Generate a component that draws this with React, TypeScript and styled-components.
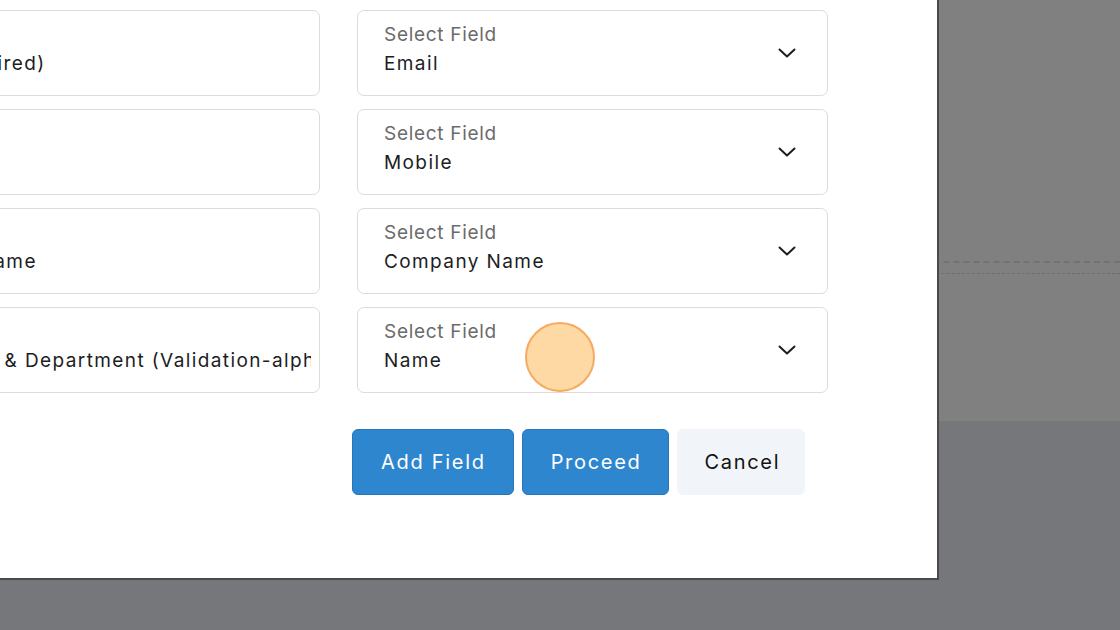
import React from 'react';
import styled, { createGlobalStyle } from 'styled-components';

const GlobalStyle = createGlobalStyle`
  html, body {
    margin: 0;
    padding: 0;
    background: #76777b;
    overflow: hidden;
  }
  body {
    font-family: 'Inter', 'DejaVu Sans', sans-serif;
  }
`;

const Page = styled.div`
  position: relative;
  width: 1120px;
  height: 630px;
`;

const Backdrop = styled.div`
  height: 421px;
  background: #808080;
  padding-top: 261px;
  box-sizing: border-box;
`;

const DashedLine = styled.div<{ $thin?: boolean }>`
  height: 0;
  border-top: ${(p) => (p.$thin ? '1px dashed #6e6e6e' : '2px dashed #727272')};
  margin-bottom: ${(p) => (p.$thin ? '0' : '10px')};
`;

const Modal = styled.div`
  position: absolute;
  top: 0;
  left: -175px;
  width: 1114px;
  height: 580px;
  box-sizing: border-box;
  background: #fff;
  border-right: 2px solid #4a4a4a;
  border-bottom: 2px solid #4a4a4a;
  padding: 10px 0 0 24px;
`;

const FieldGrid = styled.div`
  display: grid;
  grid-template-columns: 471px 471px;
  column-gap: 37px;
  row-gap: 13px;
`;

const FieldBox = styled.div`
  height: 86px;
  box-sizing: border-box;
  border: 1px solid #dcdcdc;
  border-radius: 7px;
  padding: 0 8px 0 26px;
  display: flex;
  align-items: center;
  gap: 12px;
  cursor: pointer;
`;

const FieldText = styled.div`
  flex: 1;
  min-width: 0;
  align-self: flex-start;
  padding-top: 9px;
`;

const Label = styled.div`
  font-size: 19px;
  line-height: 29px;
  color: #6b6b6b;
  white-space: nowrap;
  letter-spacing: 0.7px;
`;

const Value = styled.div`
  font-size: 19px;
  line-height: 30px;
  color: #1d1d1f;
  white-space: nowrap;
  overflow: hidden;
  letter-spacing: 1.4px;
`;

const Chevron = styled.svg`
  width: 18px;
  height: 10px;
  margin: 0 23px 0 0;
  flex-shrink: 0;
`;

const ButtonRow = styled.div`
  grid-column: 2;
  display: flex;
  gap: 8px;
  margin: 23px 0 0 -5px;
`;

const Button = styled.button<{ $variant?: 'primary' | 'light' }>`
  height: 66px;
  padding: ${(p) => (p.$variant === 'light' ? '0 24px 0 26px' : '0 27px 0 28px')};
  border-radius: 6px;
  font-family: 'Inter', 'DejaVu Sans', sans-serif;
  font-size: 20px;
  letter-spacing: 1.7px;
  cursor: pointer;
  border: 1px solid ${(p) => (p.$variant === 'light' ? '#f1f4f8' : '#2676bb')};
  background: ${(p) => (p.$variant === 'light' ? '#f1f4f8' : '#2e86cf')};
  color: ${(p) => (p.$variant === 'light' ? '#111' : '#fff')};
`;

const ClickMarker = styled.div`
  position: absolute;
  left: 525px;
  top: 322px;
  width: 70px;
  height: 70px;
  box-sizing: border-box;
  border-radius: 50%;
  background: rgba(254, 208, 140, 0.8);
  border: 2px solid #f4aa60;
  pointer-events: none;
`;

const rows = [
  { name: 'Email (Required)', mapped: 'Email' },
  { name: '', mapped: 'Mobile' },
  { name: 'Company Name', mapped: 'Company Name' },
  { name: 'Designation & Department (Validation-alphabets)', mapped: 'Name' },
];

const ChevronDown = () => (
  <Chevron viewBox="0 0 18 10" fill="none">
    <polyline points="1.5,1.5 9,8.5 16.5,1.5" stroke="#1d1d1f" strokeWidth="2" strokeLinecap="round" strokeLinejoin="round" />
  </Chevron>
);

const App: React.FC = () => {
  return (
    <>
      <GlobalStyle />
      <Page>
        <Backdrop>
          <DashedLine />
          <DashedLine $thin />
        </Backdrop>
        <Modal>
          <FieldGrid>
            {rows.map((row) => (
              <React.Fragment key={row.mapped}>
                <FieldBox>
                  <FieldText>
                    <Label>Label</Label>
                    <Value>{row.name}</Value>
                  </FieldText>
                </FieldBox>
                <FieldBox>
                  <FieldText>
                    <Label>Select Field</Label>
                    <Value>{row.mapped}</Value>
                  </FieldText>
                  <ChevronDown />
                </FieldBox>
              </React.Fragment>
            ))}
            <ButtonRow>
              <Button>Add Field</Button>
              <Button>Proceed</Button>
              <Button $variant="light">Cancel</Button>
            </ButtonRow>
          </FieldGrid>
        </Modal>
        <ClickMarker />
      </Page>
    </>
  );
};

export default App;
